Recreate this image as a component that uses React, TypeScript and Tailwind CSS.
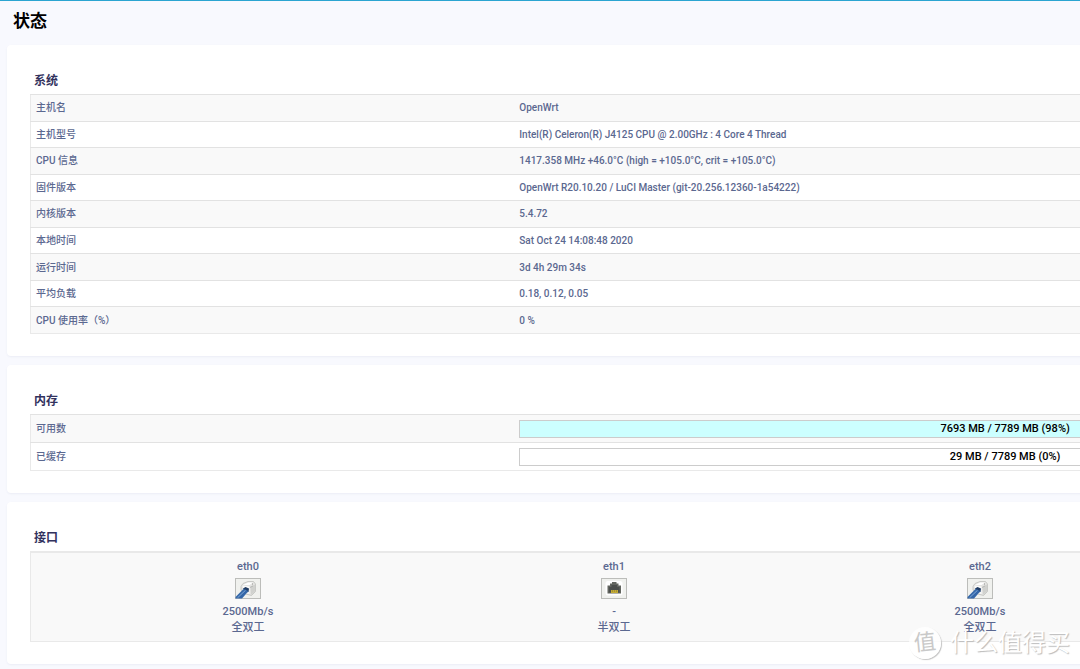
import type { ReactNode } from 'react';

const SYSTEM: [string, string][] = [
  ['主机名', 'OpenWrt'],
  ['主机型号', 'Intel(R) Celeron(R) J4125 CPU @ 2.00GHz : 4 Core 4 Thread'],
  ['CPU 信息', '1417.358 MHz +46.0°C (high = +105.0°C, crit = +105.0°C)'],
  ['固件版本', 'OpenWrt R20.10.20 / LuCI Master (git-20.256.12360-1a54222)'],
  ['内核版本', '5.4.72'],
  ['本地时间', 'Sat Oct 24 14:08:48 2020'],
  ['运行时间', '3d 4h 29m 34s'],
  ['平均负载', '0.18, 0.12, 0.05'],
  ['CPU 使用率（%）', '0 %'],
];

const MEMORY = [
  { label: '可用数', used: 7693, total: 7789, percent: 98 },
  { label: '已缓存', used: 29, total: 7789, percent: 0 },
];

const PORTS = [
  { name: 'eth0', up: true, speed: '2500Mb/s', duplex: '全双工' },
  { name: 'eth1', up: false, speed: '-', duplex: '半双工' },
  { name: 'eth2', up: true, speed: '2500Mb/s', duplex: '全双工' },
];

function PortIcon({ up }: { up: boolean }) {
  return (
    <svg width="26" height="21" viewBox="0 0 26 21" aria-hidden="true">
      <rect x="0.5" y="0.5" width="25" height="20" fill="#f0f1ee" stroke="#bcbdba" />
      {up ? (
        <>
          <path
            d="M6 8.5 8 5.5 13 3.5 18.5 3.5 20.5 6V13.5L16.5 17.5 9 15.5 6 12z"
            fill="#e4e4e2"
            stroke="#bfc0bd"
            strokeWidth="0.8"
          />
          <path d="M8 7 13 4.5 18 4.5 14.5 7z" fill="#ffffff" />
          <path d="M15.5 8.5 20 6.5V13.5L16 17z" fill="#d0d1ce" />
          <path d="M7.5 7.5 14.5 8.5V16L8.5 14.5z" fill="#fafaf9" />
          <path d="M15 9.5 18 8M17.5 5 17.5 7" stroke="#aeb0ad" strokeWidth="0.8" />
          <path d="M8 10.5 10.5 9 14 10.5 13.5 14 10.5 14.5z" fill="#203c63" />
          <path d="M0.5 20.5V19L8.5 11 13.5 13 7 20.5z" fill="#3567a8" />
          <path d="M2.5 19.8 10.5 12.3" stroke="#7fa8d8" strokeWidth="1" />
        </>
      ) : (
        <>
          <rect x="4.5" y="3" width="17" height="14.5" rx="2.5" fill="#ffffff" />
          <path
            d="M6.5 15.5V7.5H9V5.5H11V4H15.5V5.5H17.5V7.5H20V15.5z"
            fill="#62655f"
          />
          <path d="M8 14.5V9H10.5V7H16V9H18.5V14.5z" fill="#4b4e4c" />
          <path d="M10 12h7v3h-7z" fill="#c6ad35" />
          <path d="M11.5 12v2M13.5 12v2M15.5 12v2" stroke="#8d8036" strokeWidth="0.6" />
        </>
      )}
    </svg>
  );
}

function Section({ title, children }: { title: string; children: ReactNode }) {
  return (
    <section className="rounded-sm bg-white px-[23px] pt-7 pb-[22px] shadow-[0_1px_2px_rgba(90,100,140,0.08)]">
      <h3 className="h-[21px] pl-1 text-[12px] leading-4 font-bold text-[#32325d]">{title}</h3>
      {children}
    </section>
  );
}

export default function App() {
  return (
    <div className="relative min-h-screen overflow-hidden border-t border-[#2ba5d1] bg-[#f8f9fe] font-[Roboto,'Noto_Sans_CJK_SC',sans-serif] text-[10px] leading-4 font-medium text-[#5b6890]">
      <header className="px-[13px] pt-2">
        <h2 className="h-9 text-[17px] leading-6 font-bold text-black">状态</h2>
      </header>

      <main className="flex min-w-[1520px] flex-col gap-[9px] pl-[7px]">
        <Section title="系统">
          <table className="h-[240px] w-full border-collapse border border-[#e9e9e9]">
            <tbody>
              {SYSTEM.map(([label, value]) => (
                <tr key={label} className="border-t border-[#e2e2e2] odd:bg-[#f9f9f9]">
                  <th scope="row" className="w-[33%] px-[5px] pt-px text-left font-medium">{label}</th>
                  <td className="px-[5px] pt-px">{value}</td>
                </tr>
              ))}
            </tbody>
          </table>
        </Section>

        <Section title="内存">
          <table className="h-[57px] w-full border-collapse border border-[#e9e9e9]">
            <tbody>
              {MEMORY.map((m) => (
                <tr key={m.label} className="border-t border-[#e2e2e2] odd:bg-[#f9f9f9]">
                  <th scope="row" className="w-[33%] px-[5px] text-left font-medium">{m.label}</th>
                  <td className="px-[5px]">
                    <div className="grid h-[18px] border border-[#cccccc] bg-white text-center text-[11px] text-black">
                      <div
                        className="col-start-1 row-start-1 bg-[#ccffff]"
                        style={{ width: `${m.percent}%` }}
                      />
                      <span className="col-start-1 row-start-1">
                        {m.used} MB / {m.total} MB ({m.percent}%)
                      </span>
                    </div>
                  </td>
                </tr>
              ))}
            </tbody>
          </table>
        </Section>

        <Section title="接口">
          <div className="flex border border-t-2 border-[#e9e9e9] bg-[#f9f9f9] pt-[6px] pb-[5px] pl-[34px] text-[11px]">
            {PORTS.map((p) => (
              <div key={p.name} className="flex w-[366px] shrink-0 flex-col items-center">
                <span className="mb-[3px]">{p.name}</span>
                <PortIcon up={p.up} />
                <span className="mt-[5px]">{p.speed}</span>
                <span>{p.duplex}</span>
              </div>
            ))}
          </div>
        </Section>
      </main>

      <div className="absolute right-[10px] bottom-2 flex items-center gap-[9px] font-normal text-white [text-shadow:1px_1px_1px_#bbb]">
        <span className="flex size-8 items-center justify-center rounded-full bg-white/80 shadow-[1px_1px_1px_#c4c4c4]">
          <span className="-rotate-6 text-[22px] text-[#c9c9c9] [text-shadow:none]">值</span>
        </span>
        <span className="text-[24px] leading-9">什么值得买</span>
      </div>
    </div>
  );
}
